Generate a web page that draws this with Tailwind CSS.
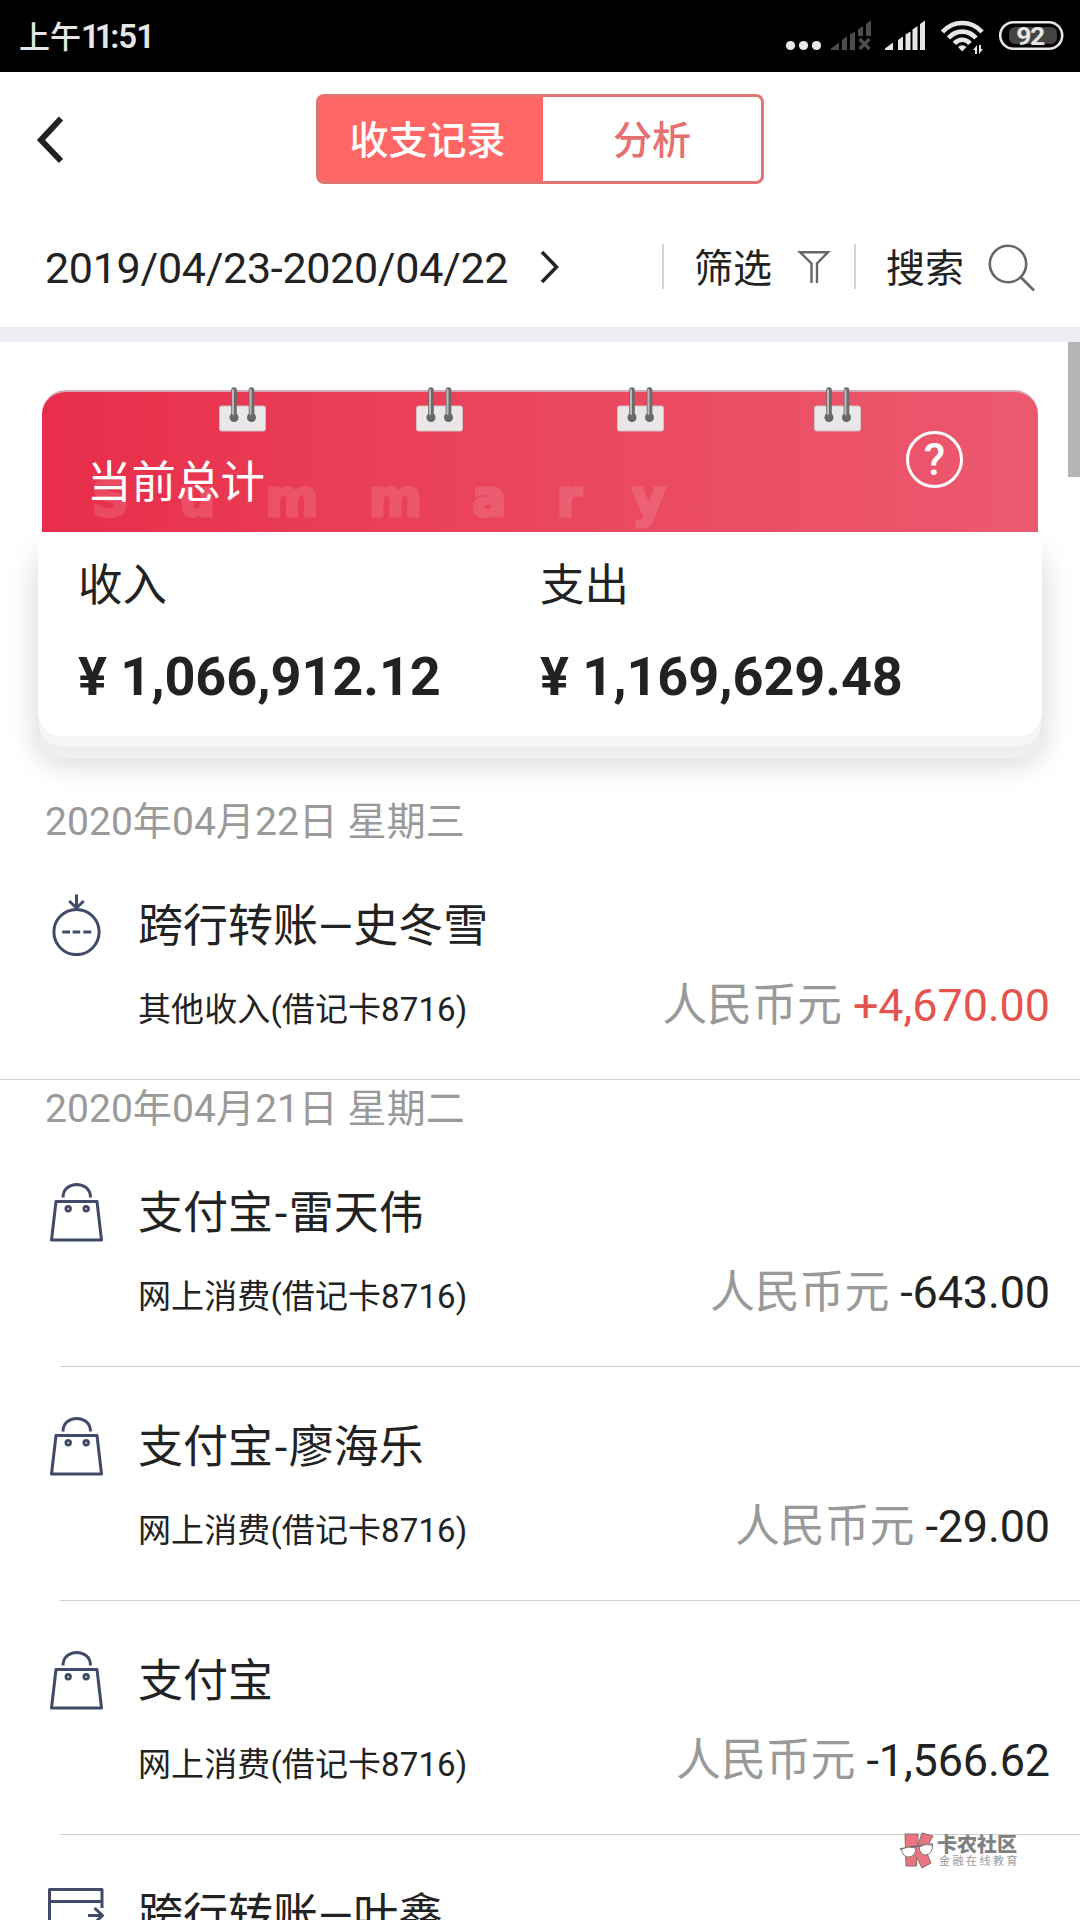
<!DOCTYPE html>
<html lang="zh-CN">
<head>
  <meta charset="UTF-8">
  <meta name="viewport" content="width=device-width, initial-scale=1.0">
  <title>收支记录</title>
  <script src="https://cdn.jsdelivr.net/npm/@tailwindcss/browser@4"></script>
</head>
<body class="w-[1080px] h-[1920px] overflow-hidden bg-white text-[#222] font-['Roboto','Noto_Sans_CJK_SC',sans-serif]">

  <!-- Icons -->
  <svg class="hidden">
    <symbol id="bag" viewBox="0 0 60 66">
      <g fill="none" stroke="#414a69" stroke-width="3" stroke-linejoin="round">
        <path d="M17 20.500C17 3 44.500 3 44.500 20.500"/>
        <path d="M10 24.500H51L55.500 63H5.500Z"/>
        <circle cx="22.200" cy="31.800" r="2.300" stroke-width="2.800"/>
        <circle cx="40.200" cy="31.800" r="2.300" stroke-width="2.800"/>
      </g>
    </symbol>
    <symbol id="income" viewBox="0 0 60 66">
      <g fill="none" stroke="#414a69" stroke-width="3">
        <circle cx="30.500" cy="42" r="22.600"/>
        <path d="M30.500 4.500V18M23.200 11L30.500 18L37.700 11M16.300 42H24M26.600 42H34.200M37.300 42H45.200"/>
      </g>
    </symbol>
    <symbol id="transfer" viewBox="0 0 60 66">
      <g fill="none" stroke="#414a69" stroke-width="3" stroke-linejoin="round">
        <path d="M56 29V10.500H3.500V60H56V52M3.500 22.500H56"/>
        <path d="M42 36.500H56M48.500 29L56.500 36.500L48.500 44"/>
      </g>
    </symbol>
    <symbol id="ring" viewBox="0 0 48 50">
      <rect x="1.500" y="20" width="46" height="25" rx="2" fill="#e9e7e7" stroke="#d3bfc3" stroke-width="1"/>
      <circle cx="16" cy="31.500" r="4.500" fill="#666"/>
      <circle cx="33.500" cy="31.500" r="4.500" fill="#666"/>
      <path d="M16 4V30M33.500 4V30" stroke="#6b6b6b" stroke-width="5.600" stroke-linecap="round"/>
      <path d="M15 4V28M32.500 4V28" stroke="#b9b9b9" stroke-width="2" stroke-linecap="round"/>
    </symbol>
  </svg>

  <!-- Status bar -->
  <div class="h-[72px] bg-black text-[#e6e6e6] flex items-center justify-between pl-[19px] pr-[16px]">
    <div class="text-[31px] leading-[72px] font-medium font-['Noto_Sans_CJK_SC',sans-serif] flex items-baseline">上午<span class="text-[33px] tracking-[-1px] font-semibold font-['Roboto']"><span class="tracking-[-5.2px]">11</span><span class="ml-[2px]">:51</span></span></div>
    <svg class="w-[280px] h-[72px]" viewBox="784 0 280 72" fill="#e6e6e6">
      <circle cx="790.500" cy="45.500" r="4.600"/>
      <circle cx="803.500" cy="45.500" r="4.600"/>
      <circle cx="816.500" cy="45.500" r="4.600"/>
      <g fill="#4d4d4d">
        <path d="M831 50V48.500L839 42.500V50ZM842 50V40L847 36.500V50ZM850 50V34.500L855 31.500V50ZM858 36V29.500L863 26V36ZM866 36V24L871 20.500V36Z"/>
        <path d="M859.500 39L869.500 49M869.500 39L859.500 49" stroke="#4d4d4d" stroke-width="3.500"/>
      </g>
      <path d="M885 50V48.500L893 42.500V50ZM898 50V40L903 36.500V50ZM905.500 50V34.500L910.500 31.500V50ZM912.500 50V29.500L917.500 26V50ZM920 50V24L925 20.500V50Z"/>
      <g fill="none" stroke="#e6e6e6" stroke-width="4.600">
        <path d="M942.500 32C953 20 971.500 20 982 32"/>
        <path d="M948.500 38C956 29.500 968.500 29.500 976 38"/>
        <path d="M954.500 43.500C958.500 38.500 966 38.500 970 43.500"/>
      </g>
      <path d="M958 47Q962.200 43.500 966.500 47L962.200 51.500Z"/>
      <path d="M973 50L977 45V54H975V50ZM983 49L979 54V45H981V49Z"/>
      <rect x="1009" y="27" width="48" height="17" rx="6" fill="#444"/>
      <rect x="1000.200" y="22.200" width="62" height="26.500" rx="13.250" fill="none" stroke="#e6e6e6" stroke-width="2.600"/>
      <text x="1030" y="45" text-anchor="middle" font-family="Roboto" font-size="26.500" font-weight="700" letter-spacing="-1.500">92</text>
    </svg>
  </div>

  <!-- Nav -->
  <div class="h-[134px] grid grid-cols-[316px_448px_316px] items-center">
    <svg class="ml-[34px] w-8 h-[50px]" viewBox="0 0 32 50" fill="none" stroke="#222" stroke-width="6"><path d="M27 4.500L7 26L27 47"/></svg>
    <div class="h-[90px] flex text-[39px] font-medium text-center leading-[88px] rounded-lg border-[3px] border-[#e27373] bg-[#ff6666] overflow-hidden">
      <div class="w-[224px] pr-[7px] text-white">收支记录</div>
      <div class="flex-1 bg-white text-[#e57070]">分析</div>
    </div>
  </div>

  <!-- Date range / filter / search -->
  <div class="h-[121px] flex items-center pl-[45px] text-[39px]">
    <span class="text-[43px] leading-[60px] tracking-[-0.3px] w-[495px] pt-[3px]">2019/04/23-2020/04/22</span>
    <svg class="w-5 h-[36px]" viewBox="0 0 20 36" fill="none" stroke="#222" stroke-width="3.500"><path d="M2 3L16.500 18L2 33"/></svg>
    <span class="w-[2px] h-[45px] bg-[#d0d4d4] ml-[102px]"></span>
    <span class="ml-[30px] leading-[60px] pt-[4px] w-[102px]">筛选</span>
    <svg class="w-[36px] h-[36px]" viewBox="0 0 36 36" fill="none" stroke="#666" stroke-width="2.400"><path d="M15.500 34V14.500L4 3.200H32L21 14.500V34"/></svg>
    <span class="w-[2px] h-[45px] bg-[#d0d4d4] ml-[22px]"></span>
    <span class="ml-[30px] leading-[60px] pt-[4px] w-[100px]">搜索</span>
    <svg class="w-[50px] h-[50px]" viewBox="0 0 50 50" fill="none" stroke="#666" stroke-width="2.600"><circle cx="22" cy="22" r="18.200"/><path d="M34.500 35L48 48.500"/></svg>
  </div>
  <div class="h-[15px] bg-[#eeedf4]"></div>

  <!-- Summary -->
  <div class="relative h-[451px] pt-12">
    <div class="absolute right-0 top-0 w-3 h-[135px] bg-[#b5b5b5]"></div>
    <div class="relative z-10 mx-[42px] h-[142px] rounded-t-[24px] bg-linear-to-r from-[#e82d4a] to-[#ec596f] border-t-2 border-[#d5a9b4] flex items-start justify-between">
      <div class="absolute left-[50px] top-[77px] text-[51px] leading-[60px] font-bold tracking-[50.2px] text-white opacity-12 [-webkit-text-stroke:3px_white] font-['DejaVu_Sans']">Summary</div>
      <svg class="absolute left-[176px] -top-[6px] w-12 h-[50px]"><use href="#ring"/></svg>
      <svg class="absolute left-[373px] -top-[6px] w-12 h-[50px]"><use href="#ring"/></svg>
      <svg class="absolute left-[574px] -top-[6px] w-12 h-[50px]"><use href="#ring"/></svg>
      <svg class="absolute left-[771px] -top-[6px] w-12 h-[50px]"><use href="#ring"/></svg>
      <div class="relative text-white text-[44.5px] leading-[60px] pl-[45px] mt-[61px]">当前总计</div>
      <div class="mr-[75px] mt-[39px] w-[57px] h-[57px] rounded-full border-[3px] border-white text-white text-[44px] font-medium leading-[52px] text-center">?</div>
    </div>
    <div class="mx-[38px] h-[204px] rounded-b-[24px] bg-white grid grid-cols-[462px_1fr] pl-[40px] shadow-[0_12px_0_-1px_#f5f5f5,0_25px_0_-2px_#eeeeee,0_26px_30px_rgba(0,0,0,0.18)]">
      <div>
        <div class="text-[44.5px] leading-[60px] mt-[24px]">收入</div>
        <div class="text-[54px] leading-[60px] font-bold tracking-[-0.05px] mt-[31px]">¥ 1,066,912.12</div>
      </div>
      <div>
        <div class="text-[44.5px] leading-[60px] mt-[24px]">支出</div>
        <div class="text-[54px] leading-[60px] font-bold tracking-[-0.05px] mt-[31px]">¥ 1,169,629.48</div>
      </div>
    </div>
  </div>

  <!-- Records -->
  <div class="h-[53px] leading-[59px] pl-[45px] text-[39px] tracking-[0.05px] text-[#999]">2020年04月22日 星期三</div>
  <div class="h-[233px] flex">
    <svg class="w-[60px] h-[66px] ml-[46px] mt-[44px]"><use href="#income"/></svg>
    <div class="flex-1 pl-[32px] pr-[30px] pt-[58px]">
      <div class="text-[45px] leading-[46px]">跨行转账—史冬雪</div>
      <div class="mt-[26px] flex items-baseline justify-between leading-[60px]">
        <span class="text-[33px] tracking-[0.1px]">其他收入(借记卡8716)</span>
        <span class="text-[45px] tracking-[-0.1px] text-[#e5534f]"><span class="text-[#999]">人民币元</span> +4,670.00</span>
      </div>
    </div>
  </div>
  <div class="h-px bg-[#ccd0d0]"></div>

  <div class="h-[53px] leading-[59px] pl-[45px] text-[39px] tracking-[0.05px] text-[#999]">2020年04月21日 星期二</div>
  <div class="h-[233px] flex">
    <svg class="w-[60px] h-[66px] ml-[46px] mt-[44px]"><use href="#bag"/></svg>
    <div class="flex-1 pl-[32px] pr-[30px] pt-[58px]">
      <div class="text-[45px] leading-[46px]">支付宝<span class="mx-[1.7px]">-</span>雷天伟</div>
      <div class="mt-[26px] flex items-baseline justify-between leading-[60px]">
        <span class="text-[33px] tracking-[0.1px]">网上消费(借记卡8716)</span>
        <span class="text-[45px] tracking-[-0.15px]"><span class="text-[#999]">人民币元</span> -643.00</span>
      </div>
    </div>
  </div>
  <div class="h-px ml-[60px] bg-[#d0d0d0]"></div>
  <div class="h-[233px] flex">
    <svg class="w-[60px] h-[66px] ml-[46px] mt-[44px]"><use href="#bag"/></svg>
    <div class="flex-1 pl-[32px] pr-[30px] pt-[58px]">
      <div class="text-[45px] leading-[46px]">支付宝<span class="mx-[1.7px]">-</span>廖海乐</div>
      <div class="mt-[26px] flex items-baseline justify-between leading-[60px]">
        <span class="text-[33px] tracking-[0.1px]">网上消费(借记卡8716)</span>
        <span class="text-[45px] tracking-[-0.15px]"><span class="text-[#999]">人民币元</span> -29.00</span>
      </div>
    </div>
  </div>
  <div class="h-px ml-[60px] bg-[#d0d0d0]"></div>
  <div class="h-[233px] flex">
    <svg class="w-[60px] h-[66px] ml-[46px] mt-[44px]"><use href="#bag"/></svg>
    <div class="flex-1 pl-[32px] pr-[30px] pt-[58px]">
      <div class="text-[45px] leading-[46px]">支付宝</div>
      <div class="mt-[26px] flex items-baseline justify-between leading-[60px]">
        <span class="text-[33px] tracking-[0.1px]">网上消费(借记卡8716)</span>
        <span class="text-[45px] tracking-[-0.15px]"><span class="text-[#999]">人民币元</span> -1,566.62</span>
      </div>
    </div>
  </div>
  <div class="h-px ml-[60px] bg-[#d0d0d0]"></div>
  <div class="h-[85px] flex overflow-hidden">
    <svg class="w-[60px] h-[66px] ml-[46px] mt-[44px] shrink-0"><use href="#transfer"/></svg>
    <div class="pl-[32px] pt-[58px] text-[45px] leading-[46px]">跨行转账—叶鑫</div>
  </div>

  <!-- Watermark -->
  <div class="absolute left-[899px] top-[1832px] flex">
    <svg class="w-[35px] h-[38px]" viewBox="0 0 35 38">
      <path d="M6 2H19V13L23 1L34 4L26.500 18L32 31L23 36L17.500 25V34H7Z" fill="#ea7480" stroke="#8a6a6e" stroke-width="1"/>
      <path d="M1 17L15 14.500L20 14L34 12" stroke="#666" stroke-width="1.500"/>
      <path d="M2.500 17Q9 13.500 17 16Q16.500 25 9.500 25Q3.500 25 2.500 17ZM20 15Q26 11 33.500 13Q33.500 22 27 23Q21 23 20 15Z" fill="#fff" stroke="#777" stroke-width="1"/>
    </svg>
    <div class="pl-[3px] font-['Noto_Sans_CJK_SC',sans-serif]">
      <div class="text-[20px] leading-[23px] font-black text-[#808080]">卡农社区</div>
      <div class="text-[11px] leading-[11px] tracking-[2.5px] pl-[2px] text-[#999]">金融在线教育</div>
    </div>
  </div>
</body>
</html>
